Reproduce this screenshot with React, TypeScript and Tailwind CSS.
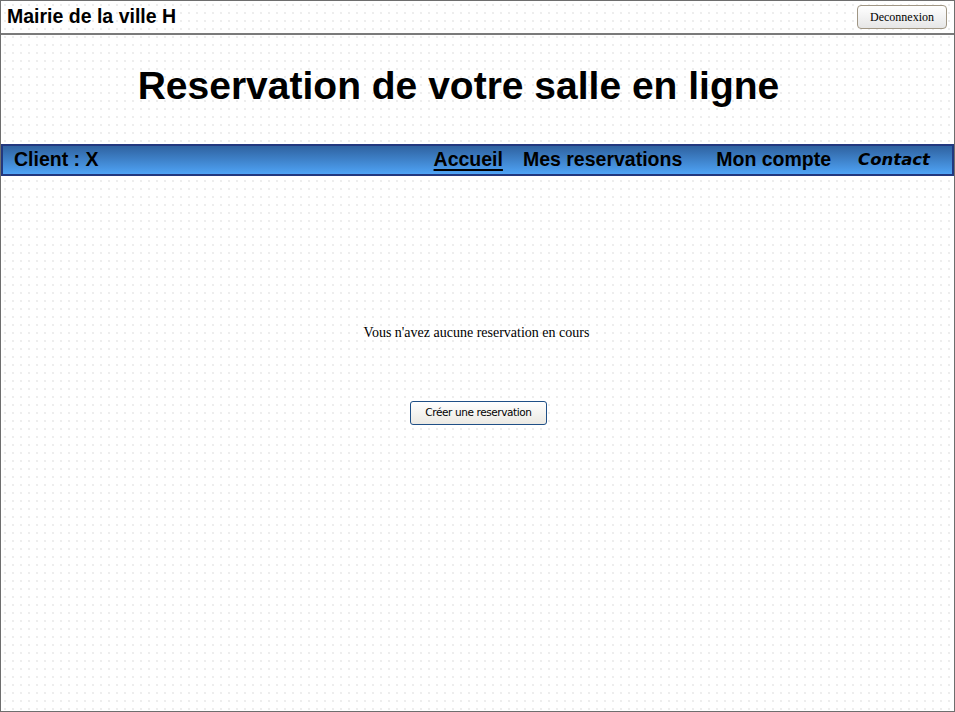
import React from 'react'

const sans = "font-['Liberation_Sans',Arial,sans-serif]"
const serif = "font-['Liberation_Serif','Times_New_Roman',serif]"

export default function App() {
  return (
    <div className="w-[955px] h-[712px] border border-[#6e6e6e] bg-white bg-[radial-gradient(#e4e4e4_0.6px,transparent_0.9px)] bg-[size:8px_8px] flex flex-col overflow-hidden">
      {/* top bar */}
      <header className="h-[34px] shrink-0 border-b-2 border-[#7a7a7a] flex items-center justify-between pl-[6px] pr-[7px]">
        <h1 className={`${sans} text-[19.5px] font-bold text-black leading-none`}>Mairie de la ville H</h1>
        <button className={`${serif} w-[90px] h-[24px] rounded-[4px] border border-[#a09684] bg-gradient-to-b from-white to-[#e6e6e6] text-[12px] text-black`}>
          Deconnexion
        </button>
      </header>

      {/* title */}
      <div className="h-[109px] shrink-0 flex items-center justify-center pr-[38px] pb-[8px]">
        <h2 className={`${sans} text-[39px] font-bold text-black leading-none`}>
          Reservation de votre salle en ligne
        </h2>
      </div>

      {/* nav */}
      <nav className={`${sans} h-[32px] shrink-0 border-2 border-[#22387f] bg-gradient-to-b from-[#2f62a0] to-[#4fa4f6] flex items-center justify-between pl-[11px] pr-[22px] text-[19.5px] text-black`}>
        <span className="font-bold">Client : X</span>
        <div className="flex items-center">
          <a className="underline decoration-2 underline-offset-[3px] font-semibold">Accueil</a>
          <a className="ml-[20px] font-bold">Mes reservations</a>
          <a className="ml-[34px] font-bold">Mon compte</a>
          <a className="ml-[27px] font-bold italic font-['Comic_Sans_MS','DejaVu_Sans',sans-serif] text-[16.5px]">Contact</a>
        </div>
      </nav>

      {/* content */}
      <main className="flex-1 flex flex-col items-center pt-[146px] pr-[2px]">
        <p className={`${serif} text-[14px] text-black`}>Vous n'avez aucune reservation en cours</p>
        <button className="mt-[58px] ml-[4px] w-[137px] h-[24px] rounded-[3px] border border-[#1f4f86] bg-gradient-to-b from-white to-[#ebe9e3] text-[10.5px] text-black font-['DejaVu_Sans',Tahoma,sans-serif] tracking-[-0.4px]">
          Créer une reservation
        </button>
      </main>
    </div>
  )
}
